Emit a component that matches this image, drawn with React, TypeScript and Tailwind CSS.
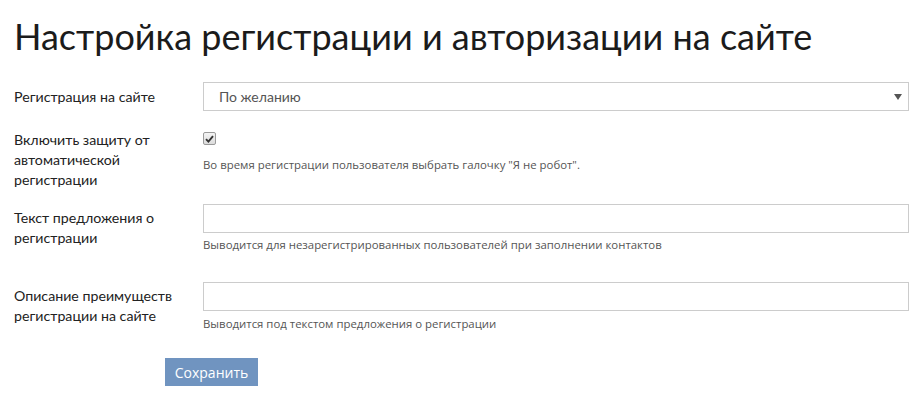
const labelFont = { fontFamily: "Lato, 'Open Sans', sans-serif" };

const Field: React.FC<{
  label: string;
  help?: string;
  className?: string;
  helpClass?: string;
}> = ({ label, help, className, helpClass }) => (
  <div className={"flex " + (className ?? "")}>
    <div className="w-[175px] mr-[14px] pt-[4px] text-[14.2px] leading-[20px] text-[#222]">
      {label}
    </div>
    <div className="flex-1">
      <div className="h-[29px] border border-[#ccc] bg-white"></div>
      {help && (
        <div
          className={
            "text-[11.4px] leading-[16px] text-[#555] font-['Open_Sans',sans-serif] " +
            (helpClass ?? "mt-[4px]")
          }
        >
          {help}
        </div>
      )}
    </div>
  </div>
);

export default function App() {
  return (
    <div
      className="w-[919px] h-[395px] bg-white px-[14px] pr-[10px] overflow-hidden"
      style={labelFont}
    >
      <h1 className="pt-[16px] text-[36px] leading-[40px] text-[#1b1b1b] font-['Lato',sans-serif]">
        Настройка регистрации и авторизации на сайте
      </h1>

      <div className="mt-[26px] flex">
        <div className="w-[175px] mr-[14px] pt-[5px] text-[14.2px] leading-[20px] text-[#222]">
          Регистрация на сайте
        </div>
        <div className="flex-1 h-[29px] border border-[#ccc] bg-white flex items-center justify-between pl-[15px] pr-[6px]">
          <span className="text-[14px] text-[#555]">По желанию</span>
          <svg width="8" height="6" viewBox="0 0 8 6">
            <path d="M0 0 H8 L4 6 Z" fill="#555" />
          </svg>
        </div>
      </div>

      <div className="mt-[15px] flex">
        <div className="w-[175px] mr-[14px] pt-[4px] text-[14.2px] leading-[20px] text-[#222]">
          Включить защиту от автоматической регистрации
        </div>
        <div className="flex-1">
          <div className="mt-[6px] w-[13px] h-[13px] border border-[#9a9a9a] rounded-[2px] bg-gradient-to-b from-[#f4f4f4] to-[#dcdcdc] flex items-center justify-center">
            <svg width="9" height="8" viewBox="0 0 9 8">
              <path
                d="M1 4.2 L3.4 6.6 L8 1.2"
                stroke="#333"
                strokeWidth="1.9"
                fill="none"
              />
            </svg>
          </div>
          <div className="mt-[12px] text-[11.4px] leading-[16px] text-[#555] font-['Open_Sans',sans-serif]">
            Во время регистрации пользователя выбрать галочку "Я не робот".
          </div>
        </div>
      </div>

      <Field
        className="mt-[14px]"
        label="Текст предложения о регистрации"
        help="Выводится для незарегистрированных пользователей при заполнении контактов"
      />

      <Field
        className="mt-[29px]"
        label="Описание преимуществ регистрации на сайте"
        help="Выводится под текстом предложения о регистрации"
        helpClass="mt-[5px]"
      />

      <button className="ml-[151px] mt-[26px] w-[93px] h-[28px] bg-[#7094c0] text-white text-[14px] font-['Open_Sans',sans-serif]">
        Сохранить
      </button>
    </div>
  );
}
